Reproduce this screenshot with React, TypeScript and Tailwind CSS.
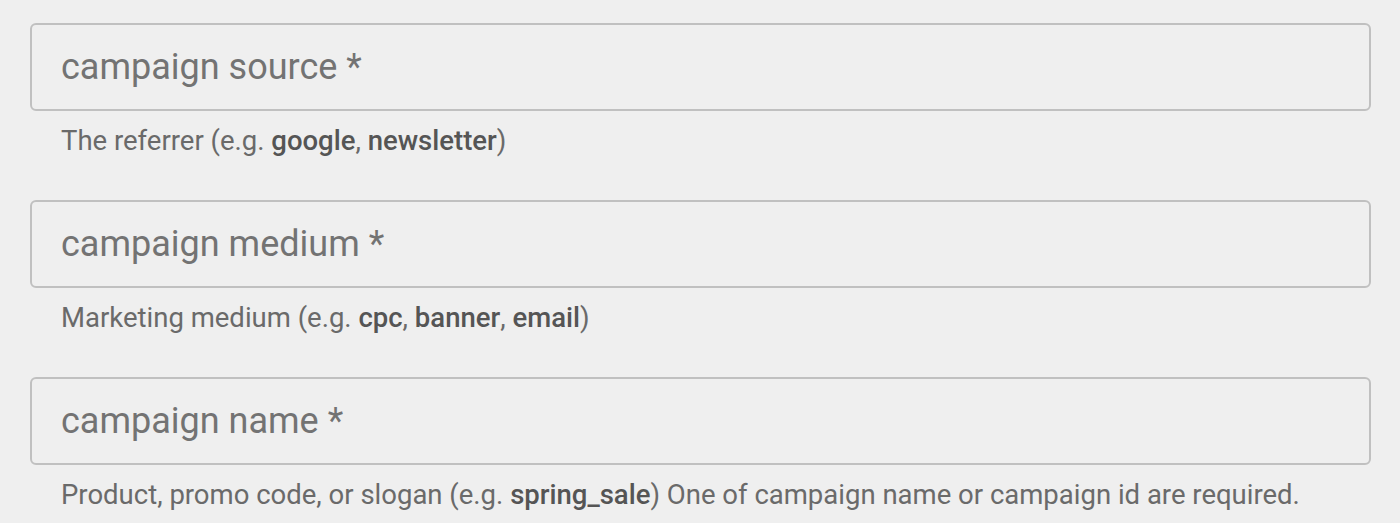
import React from "react";

type Field = {
	label: string;
	help: React.ReactNode;
};

const fields: Field[] = [
	{
		label: "campaign source *",
		help: (
			<>
				The referrer (e.g. <b className="font-medium text-[#555]">google</b>,{" "}
				<b className="font-medium text-[#555]">newsletter</b>)
			</>
		),
	},
	{
		label: "campaign medium *",
		help: (
			<>
				Marketing medium (e.g. <b className="font-medium text-[#555]">cpc</b>,{" "}
				<b className="font-medium text-[#555]">banner</b>,{" "}
				<b className="font-medium text-[#555]">email</b>)
			</>
		),
	},
	{
		label: "campaign name *",
		help: (
			<>
				Product, promo code, or slogan (e.g.{" "}
				<b className="font-medium text-[#555]">spring_sale</b>) One of campaign
				name or campaign id are required.
			</>
		),
	},
];

export default function App() {
	return (
		<div
			className="min-h-[523px] bg-[#efefef] pl-[30px] pr-[29px] pt-[23px]"
			style={{fontFamily: "Roboto, 'Liberation Sans', sans-serif"}}
		>
			<div className="flex flex-col gap-[44px]">
				{fields.map((f) => (
					<div key={f.label} className="flex flex-col">
						<input
							type="text"
							placeholder={f.label}
							className="h-[88px] w-full rounded-[6px] border-2 border-[#c0c0c0] bg-transparent px-[29px] text-[36px] text-[#555] outline-none placeholder:text-[#737373]"
						/>
						<p className="mt-[15px] h-[30px] pl-[31px] text-[27.5px] leading-[30px] text-[#6a6a6a]">
							{f.help}
						</p>
					</div>
				))}
			</div>
		</div>
	);
}
